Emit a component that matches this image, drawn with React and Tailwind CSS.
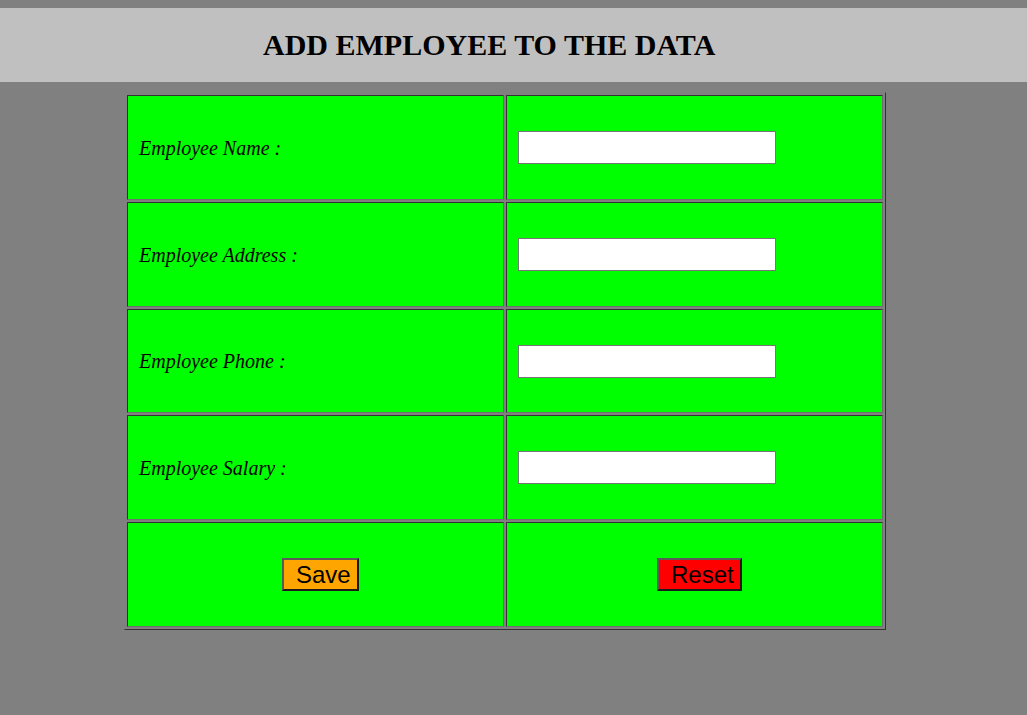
import React from "react";

const rows = [
  { label: "Employee Name :", h: "h-[105px]" },
  { label: "Employee Address :", h: "h-[105px]" },
  { label: "Employee Phone :", h: "h-[104px]" },
  { label: "Employee Salary :", h: "h-[105px]" },
];

const cell =
  "bg-[#00ff00] border border-t-[#333333] border-l-[#333333] border-b-[#707070] border-r-[#707070] flex items-center";

export default function App() {
  return (
    <div className="min-h-[715px] w-full bg-[#808080] pt-[8px] font-['Liberation_Serif',serif]">
      <div className="h-[74px] bg-[#c0c0c0] flex items-center pl-[263px]">
        <h1 className="text-[30px] font-bold text-black leading-none">
          ADD EMPLOYEE TO THE DATA
        </h1>
      </div>
      <div className="mt-[10px] ml-[124px] w-[762px] border border-t-[#808080] border-l-[#808080] border-b-[#333333] border-r-[#333333] p-[2px]">
        <div className="grid grid-cols-[377px_377px] gap-[2px]">
          {rows.map((r) => (
            <React.Fragment key={r.label}>
              <div className={`${cell} ${r.h} pl-[11px]`}>
                <span className="italic text-[20px] text-black leading-none">
                  {r.label}
                </span>
              </div>
              <div className={`${cell} ${r.h} pl-[11px]`}>
                <input
                  type="text"
                  className="w-[258px] h-[33px] bg-white border border-[#767676] outline-none"
                />
              </div>
            </React.Fragment>
          ))}
          <div className={`${cell} h-[105px] justify-center pl-[10px]`}>
            <button className="bg-[#ffa500] border-2 border-t-[#5a5a5a] border-l-[#5a5a5a] border-b-[#1a1a1a] border-r-[#1a1a1a] pl-[5px] pr-[6px] py-[1px] text-[24px] leading-[1.15] text-black font-['Liberation_Sans',sans-serif] whitespace-pre">
              {" Save"}
            </button>
          </div>
          <div className={`${cell} h-[105px] justify-center pl-[10px]`}>
            <button className="bg-[#ff0000] border-2 border-t-[#5a5a5a] border-l-[#5a5a5a] border-b-[#1a1a1a] border-r-[#1a1a1a] pl-[5px] pr-[6px] py-[1px] text-[24px] leading-[1.15] text-black font-['Liberation_Sans',sans-serif] whitespace-pre">
              {" Reset"}
            </button>
          </div>
        </div>
      </div>
    </div>
  );
}
